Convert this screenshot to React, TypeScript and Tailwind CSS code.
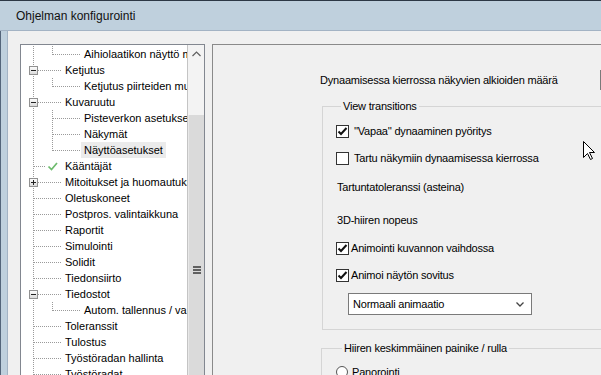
import React from "react";

type Row = { t: string; lvl?: 1 | 2; exp?: "-" | "+"; last?: boolean; sel?: boolean; check?: boolean };

const rows: Row[] = [
  { t: "Aihiolaatikon näyttö m", lvl: 2, last: true },
  { t: "Ketjutus", exp: "-" },
  { t: "Ketjutus piirteiden muk", lvl: 2, last: true },
  { t: "Kuvaruutu", exp: "-" },
  { t: "Pisteverkon asetukset", lvl: 2 },
  { t: "Näkymät", lvl: 2 },
  { t: "Näyttöasetukset", lvl: 2, last: true, sel: true },
  { t: "Kääntäjät", check: true },
  { t: "Mitoitukset ja huomautukset", exp: "+" },
  { t: "Oletuskoneet" },
  { t: "Postpros. valintaikkuna" },
  { t: "Raportit" },
  { t: "Simulointi" },
  { t: "Solidit" },
  { t: "Tiedonsiirto" },
  { t: "Tiedostot", exp: "-" },
  { t: "Autom. tallennus / varmuuskopio", lvl: 2, last: true },
  { t: "Toleranssit" },
  { t: "Tulostus" },
  { t: "Työstöradan hallinta" },
  { t: "Työstöradat" },
];

const DOT = "#9a9a9a";

function Connector({ r }: { r: Row }) {
  const lvl2 = r.lvl === 2;
  const w = lvl2 ? 60 : 44;
  return (
    <svg width={w} height={16} className="shrink-0 block">
      <line x1={12.5} y1={0} x2={12.5} y2={16} stroke={DOT} strokeDasharray="1 1" />
      {lvl2 ? (
        <>
          <line x1={31.5} y1={0} x2={31.5} y2={r.last ? 9 : 16} stroke={DOT} strokeDasharray="1 1" />
          <line x1={32} y1={8.5} x2={59} y2={8.5} stroke={DOT} strokeDasharray="1 1" />
        </>
      ) : r.exp ? (
        <>
          <line x1={17} y1={8.5} x2={41} y2={8.5} stroke={DOT} strokeDasharray="1 1" />
          <defs>
            <linearGradient id="eg" x1="0" y1="0" x2="0" y2="1">
              <stop offset="0" stopColor="#ffffff" />
              <stop offset="1" stopColor="#d8d8d8" />
            </linearGradient>
          </defs>
          <rect x={8.5} y={4.5} width={8} height={8} fill="url(#eg)" stroke="#919191" />
          <rect x={10} y={8} width={5} height={1} fill="#222" />
          {r.exp === "+" && <rect x={12} y={6} width={1} height={5} fill="#222" />}
        </>
      ) : r.check ? (
        <>
          <line x1={13} y1={8.5} x2={24} y2={8.5} stroke={DOT} strokeDasharray="1 1" />
          <path d="M27.5 8.5 L30.5 11.5 L36 5" fill="none" stroke="#6dbb6d" strokeWidth={1.7} />
        </>
      ) : (
        <line x1={13} y1={8.5} x2={41} y2={8.5} stroke={DOT} strokeDasharray="1 1" />
      )}
    </svg>
  );
}

function CheckBox({ checked }: { checked?: boolean }) {
  return (
    <div className="w-[13px] h-[13px] border border-[#333333] bg-white shrink-0 flex items-center justify-center">
      {checked && (
        <svg width={11} height={11} viewBox="0 0 11 11">
          <path d="M1.5 5.5 L4 8 L9.5 2" fill="none" stroke="#111" strokeWidth={2} />
        </svg>
      )}
    </div>
  );
}

export default function App() {
  return (
    <div className="w-[601px] h-[375px] overflow-hidden relative bg-[#f0f0f0] flex flex-col font-['Liberation_Sans',Arial,sans-serif] text-black">
      {/* title bar */}
      <div className="h-[31px] shrink-0 bg-[#bfd0dd] border-t border-t-[#2c3845] border-b border-b-[#a3b3c4] flex items-center pl-[16px]">
        <span className="text-[12px] leading-[16px] text-[#111]">Ohjelman konfigurointi</span>
      </div>
      <div className="flex flex-1 min-h-0">
        {/* left frame */}
        <div className="w-[8px] shrink-0 bg-[#bfd0dd] border-l border-l-[#54657a] border-r border-r-[#a3b3c4]" />
        <div className="flex-1 flex items-start pt-[13px] pl-[12px] min-w-0">
          {/* tree */}
          <div className="w-[185px] h-[360px] shrink-0 border border-[#828790] bg-white flex">
            <div className="w-[166px] overflow-hidden pt-[1px] text-[11px] leading-[16px]">
              {rows.map((r, i) => (
                <div key={i} className="flex h-[16px] whitespace-nowrap">
                  <Connector r={r} />
                  <span className={`${r.lvl === 2 ? "pl-[3px] pr-[3px]" : "pl-[0px]"} ${r.sel ? "bg-[#ebebeb]" : ""}`}>{r.t}</span>
                </div>
              ))}
            </div>
            <div className="w-[17px] shrink-0 border-l border-l-[#c4c4c4] bg-[#f3f3f3] flex flex-col">
              <div className="h-[17px] flex items-center justify-center">
                <svg width={9} height={6} viewBox="0 0 9 6">
                  <path d="M0.5 5 L4.5 1 L8.5 5" fill="none" stroke="#606060" strokeWidth={1.2} />
                </svg>
              </div>
              <div className="h-[53px]" />
              <div className="flex-1 bg-[#dadada] border-l border-l-[#e8e8e8] flex flex-col items-center pt-[151px]">
                <svg width={8} height={8} viewBox="0 0 8 8">
                  <rect x={0} y={0} width={8} height={2} fill="#606060" />
                  <rect x={0} y={3} width={8} height={2} fill="#606060" />
                  <rect x={0} y={6} width={8} height={2} fill="#606060" />
                </svg>
              </div>
            </div>
          </div>
          {/* right panel */}
          <div className="ml-[7px] w-[420px] h-[360px] shrink-0 border-l border-t border-[#8a8a8a] bg-[#f0f0f0] text-[11px] leading-[16px] tracking-[-0.2px]">
            <div className="pt-[25px] pl-[107px] flex items-center">
              <div className="w-[280px] shrink-0">Dynaamisessa kierrossa näkyvien alkioiden määrä</div>
              <div className="w-[60px] h-[20px] border border-[#7a7a7a] bg-white shrink-0" />
            </div>
            <fieldset className="mt-[8px] ml-[109px] w-[300px] border border-[#d5d5d5] pl-[13px] pb-[14px]">
              <legend className="ml-[5px] px-[2px] leading-[16px]">View transitions</legend>
              <div className="mt-[9px] flex items-center h-[16px] gap-[5px]">
                <CheckBox checked />
                <span>''Vapaa'' dynaaminen pyöritys</span>
              </div>
              <div className="mt-[11px] flex items-center h-[16px] gap-[5px]">
                <CheckBox />
                <span>Tartu näkymiin dynaamisessa kierrossa</span>
              </div>
              <div className="mt-[13px] h-[16px] pl-[1px]">Tartuntatoleranssi (asteina)</div>
              <div className="mt-[17px] h-[16px] pl-[1px]">3D-hiiren nopeus</div>
              <div className="mt-[12px] flex items-center h-[16px] gap-[2px]">
                <CheckBox checked />
                <span>Animointi kuvannon vaihdossa</span>
              </div>
              <div className="mt-[11px] flex items-center h-[16px] gap-[2px]">
                <CheckBox checked />
                <span>Animoi näytön sovitus</span>
              </div>
              <div className="mt-[10px] ml-[12px] w-[184px] h-[22px] border border-[#7a7a7a] bg-white flex items-center pl-[4px] pr-[7px]">
                <span className="flex-1">Normaali animaatio</span>
                <svg width={8} height={5} viewBox="0 0 8 5">
                  <path d="M0.5 0.5 L4 4 L7.5 0.5" fill="none" stroke="#444" strokeWidth={1.3} />
                </svg>
              </div>
            </fieldset>
            <fieldset className="mt-[10px] ml-[108px] w-[300px] h-[60px] border border-[#d5d5d5] pl-[14px]">
              <legend className="ml-[6px] px-[2px] leading-[16px]">Hiiren keskimmäinen painike / rulla</legend>
              <div className="mt-[8px] flex items-center h-[16px] gap-[4px]">
                <div className="w-[12px] h-[12px] rounded-full border border-[#555] bg-white" />
                <span>Panorointi</span>
              </div>
            </fieldset>
          </div>
        </div>
      </div>
      {/* mouse cursor */}
      <svg className="absolute left-[583px] top-[141px]" width={13} height={20} viewBox="0 0 13 20">
        <path d="M0.5 0.5 L0.5 16.5 L4.5 12.5 L7.5 18.5 L9.5 17.5 L6.5 11.5 L11.5 11.5 Z" fill="#fff" stroke="#000" strokeWidth={1} />
      </svg>
    </div>
  );
}
